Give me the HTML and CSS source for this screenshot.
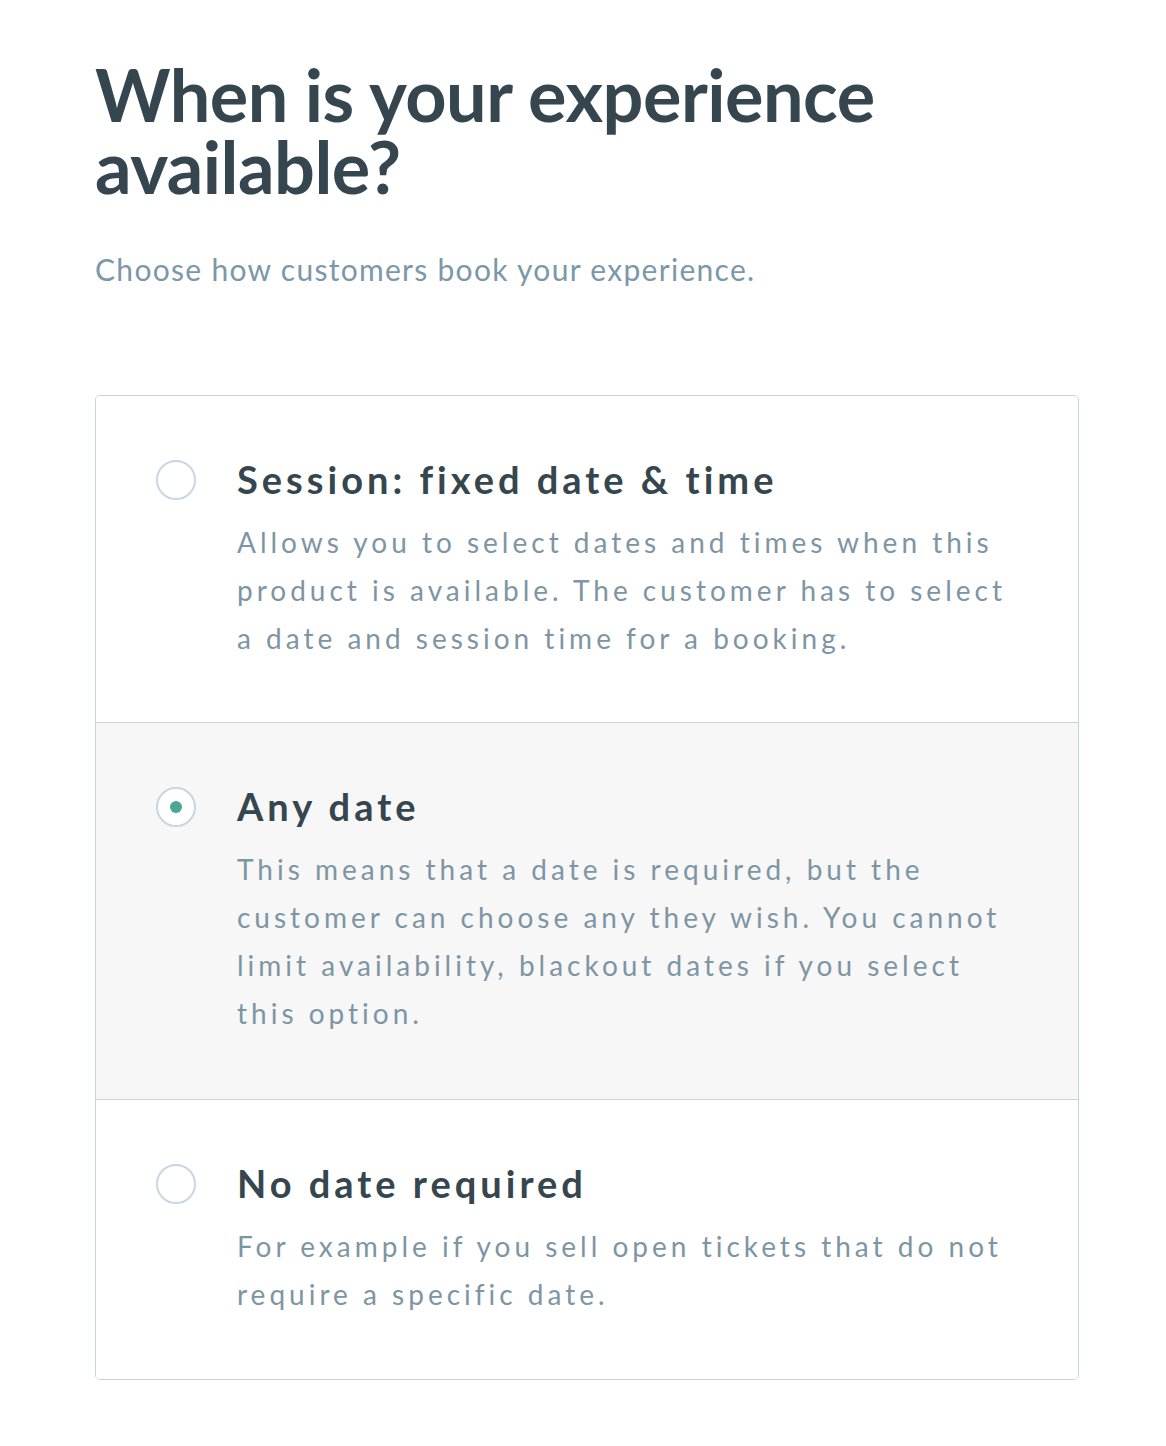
FILE: index.html
```html
<!DOCTYPE html>
<html lang="en">
<head>
<meta charset="utf-8">
<title>When is your experience available?</title>
<link rel="stylesheet" href="styles.css">
</head>
<body>
<main class="page">
  <h1 class="title">When is your experience available?</h1>
  <p class="subtitle">Choose how customers book your experience.</p>
  <div class="card">
    <label class="option">
      <span class="radio"></span>
      <span class="text">
        <span class="opt-title">Session: fixed date &amp; time</span>
        <span class="opt-desc">Allows you to select dates and times when this product is available. The customer has to select a date and session time for a booking.</span>
      </span>
    </label>
    <label class="option selected">
      <span class="radio"><span class="dot"></span></span>
      <span class="text">
        <span class="opt-title">Any date</span>
        <span class="opt-desc">This means that a date is required, but the customer can choose any they wish. You cannot limit availability, blackout dates if you select this option.</span>
      </span>
    </label>
    <label class="option">
      <span class="radio"></span>
      <span class="text">
        <span class="opt-title">No date required</span>
        <span class="opt-desc">For example if you sell open tickets that do not require a specific date.</span>
      </span>
    </label>
  </div>
</main>
</body>
</html>
```
FILE: styles.css
```css
* { box-sizing: border-box; }
body {
  margin: 0;
  background: #ffffff;
  font-family: "Lato", "Liberation Sans", sans-serif;
}
.page {
  padding: 58px 87px 60px 95px;
}
.title {
  margin: 0;
  font-size: 72px;
  line-height: 72px;
  font-weight: 700;
  color: #36464e;
  letter-spacing: -0.5px;
  max-width: 820px;
}
.subtitle {
  margin: 49px 0 0;
  font-size: 30px;
  line-height: 36px;
  color: #7b97aa;
  font-weight: 400;
  letter-spacing: 1.3px;
}
.card {
  margin-top: 108px;
  border: 1px solid #c6d4e1;
  border-radius: 5px;
  overflow: hidden;
  display: flex;
  flex-direction: column;
}
.option {
  display: flex;
  align-items: flex-start;
  gap: 41px;
  padding: 60px 60px 60px 60px;
  background: #ffffff;
}
.option + .option {
  border-top: 1px solid #c6d4e1;
}
.option.selected {
  background: #f7f7f7;
  padding-bottom: 62px;
}
.option:last-child {
  padding-bottom: 61px;
}
.radio {
  flex: none;
  width: 40px;
  height: 40px;
  margin-top: 4px;
  border: 2px solid #c8d6e3;
  border-radius: 50%;
  background: #ffffff;
  display: flex;
  align-items: center;
  justify-content: center;
}
.dot {
  width: 12px;
  height: 12px;
  border-radius: 50%;
  background: #4fa696;
}
.text {
  display: flex;
  flex-direction: column;
  gap: 16px;
}
.opt-title {
  font-size: 38px;
  line-height: 46px;
  font-weight: 700;
  color: #36464e;
  letter-spacing: 4px;
}
.opt-desc {
  font-size: 28px;
  line-height: 48px;
  color: #7e95a4;
  letter-spacing: 4px;
}
```
